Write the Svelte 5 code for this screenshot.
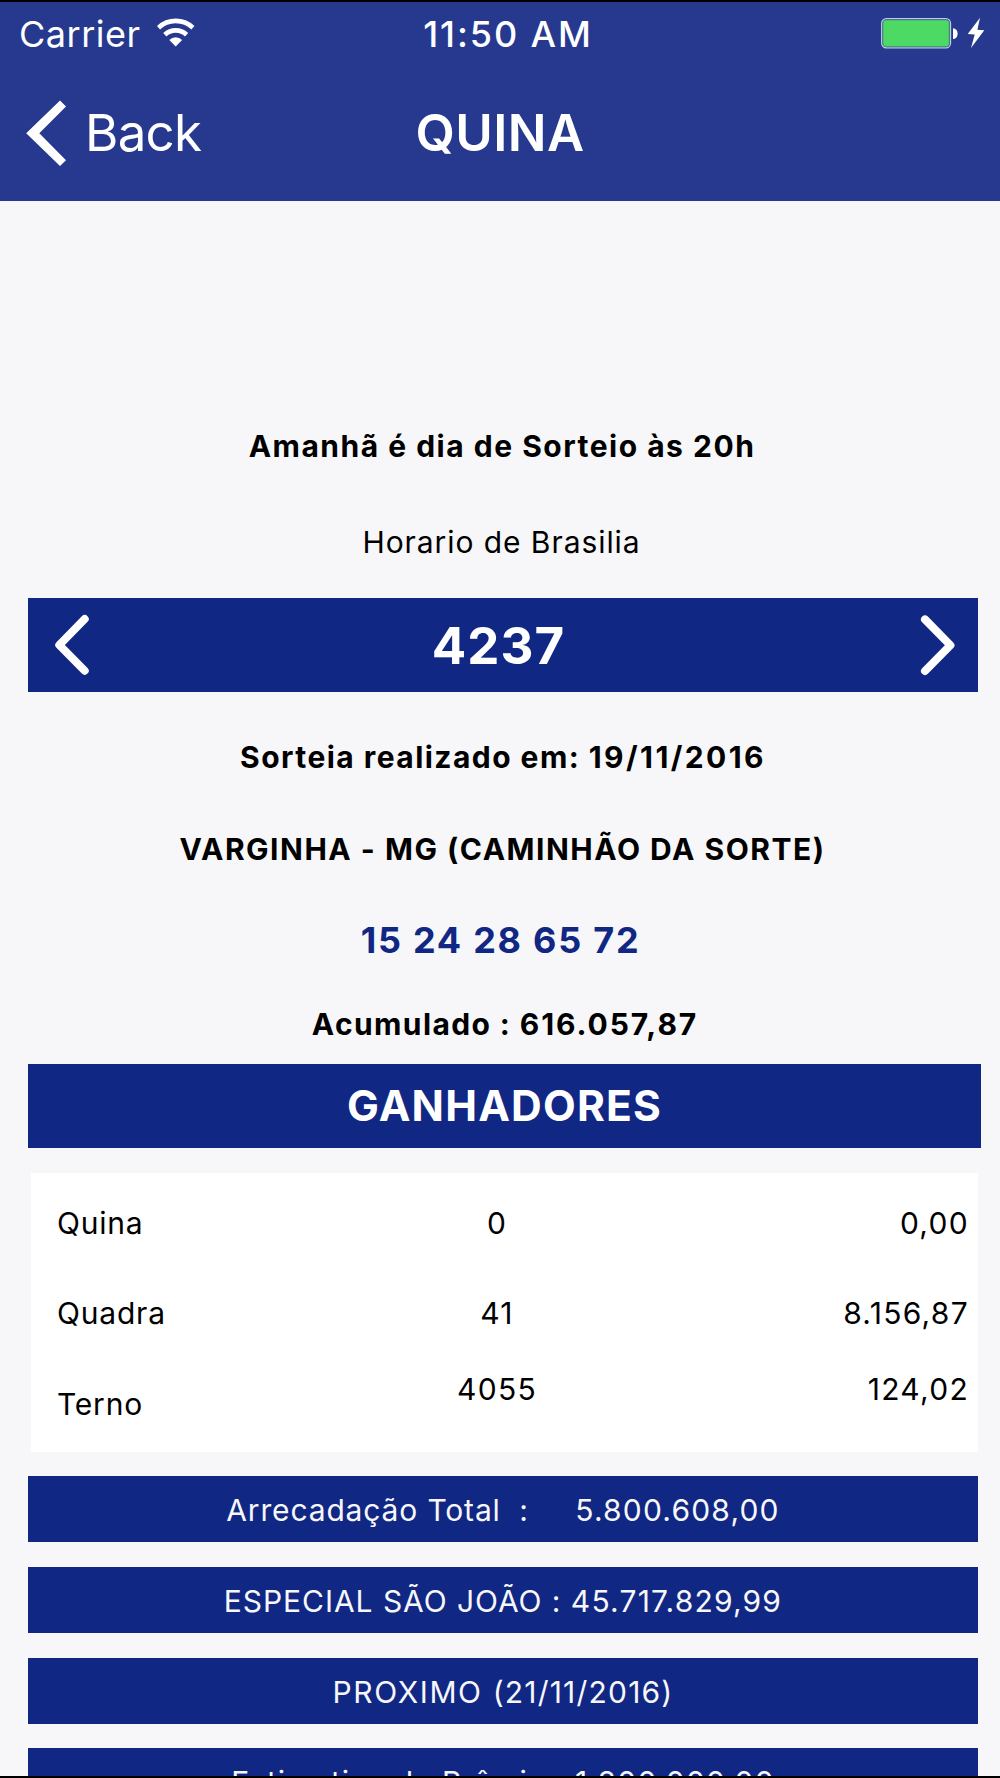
<script>
  const title = 'QUINA';
  const contest = '4237';
  const numbers = [15, 24, 28, 65, 72];

  const winners = [
    { label: 'Quina', count: '0', prize: '0,00' },
    { label: 'Quadra', count: '41', prize: '8.156,87' },
    { label: 'Terno', count: '4055', prize: '124,02' }
  ];

  const totals = [
    { label: 'Arrecadação Total  :     ', value: '5.800.608,00', tracking: 0.85 },
    { label: 'ESPECIAL SÃO JOÃO : ', value: '45.717.829,99', tracking: 0.95 },
    { label: 'PROXIMO ', value: '(21/11/2016)', tracking: 1.6 },
    { label: 'Estimativa de Prêmio : ', value: '1.800.000,00', tracking: 0.95 }
  ];
</script>

<div class="screen">
  <header>
    <div class="status-bar">
      <div class="carrier">
        <span>Carrier</span>
        <svg width="38" height="32" viewBox="0 0 38 32" fill="none" aria-hidden="true">
          <path d="M1.5 9.7A25.2 25.2 0 0 1 35.9 9.7" stroke="#fff" stroke-width="4.6" />
          <path d="M7.8 16.7A15.9 15.9 0 0 1 29.6 16.7" stroke="#fff" stroke-width="4.7" />
          <path d="M18.7 28.4 12.3 21.9A9.2 9.2 0 0 1 25.1 21.9Z" fill="#fff" />
        </svg>
      </div>
      <span class="time">11:50 AM</span>
      <svg class="battery" width="105" height="34" viewBox="0 0 105 34" aria-hidden="true">
        <rect x="1.7" y="1.7" width="68.8" height="29.2" rx="4.6" fill="none" stroke="#c3c9e3" stroke-width="1.3" />
        <rect x="3" y="3" width="66.2" height="26.6" rx="3" fill="#4cd964" stroke="#3f9c78" stroke-width="0.8" />
        <path d="M73 11.3A4.6 5.3 0 0 1 73 22Z" fill="#fff" />
        <path d="M100 .7 87.7 17 94.7 17.4 91 31 104.3 13.3 97.4 12.8Z" fill="#fff" />
      </svg>
    </div>

    <nav>
      <button class="back">
        <svg width="40" height="66" viewBox="0 0 40 66" aria-hidden="true">
          <path d="M34 .6 40 6.5 13.3 33.3 40 60.2 34 66 .2 33.3Z" fill="#fff" />
        </svg>
        <span>Back</span>
      </button>
      <h1>{title}</h1>
    </nav>
  </header>

  <main>
    <p class="line next-draw">Amanhã é dia de Sorteio às 20h</p>
    <p class="line timezone">Horario de Brasilia</p>

    <div class="contest">
      <button aria-label="Anterior">
        <svg width="36" height="62" viewBox="0 0 36 62" fill="none" aria-hidden="true">
          <path d="M30.7 5 5.3 31 30.7 56.7" stroke="#fff" stroke-width="8" stroke-linecap="round" stroke-linejoin="round" />
        </svg>
      </button>
      <h2>{contest}</h2>
      <button aria-label="Próximo">
        <svg width="36" height="62" viewBox="0 0 36 62" fill="none" aria-hidden="true">
          <path d="M5 5.4 30.4 31.2 5 57" stroke="#fff" stroke-width="8" stroke-linecap="round" stroke-linejoin="round" />
        </svg>
      </button>
    </div>

    <p class="line date">Sorteia realizado em: <span class="value">19/11/2016</span></p>
    <p class="line place">VARGINHA - MG (CAMINHÃO DA SORTE)</p>
    <p class="line numbers">{numbers.join(' ')}</p>
    <p class="line rollover">Acumulado : <span class="value">616.057,87</span></p>

    <h3>GANHADORES</h3>

    <div class="winners">
      {#each winners as row}
        <div class="row">
          <span class="label">{row.label}</span>
          <span class="count">{row.count}</span>
          <span class="prize">{row.prize}</span>
        </div>
      {/each}
    </div>

    <div class="totals">
      {#each totals as total}
        <div class="total" style="letter-spacing: {total.tracking}px">{total.label}<span class="amount">{total.value}</span></div>
      {/each}
    </div>
  </main>
</div>

<style>
  :global(body) {
    background: #000;
  }

  .screen {
    box-sizing: border-box;
    width: 1000px;
    height: 1778px;
    background: #f7f7f9;
    border-top: 2px solid #000;
    border-bottom: 2px solid #000;
    overflow: hidden;
    color: #000;
    font-family: Inter, 'Liberation Sans', sans-serif;
    font-size: 30px;
  }

  h1, h2, h3, p {
    margin: 0;
  }

  button {
    display: flex;
    align-items: center;
    padding: 0;
    border: none;
    background: none;
    color: inherit;
    font: inherit;
  }

  svg {
    display: block;
    flex-shrink: 0;
  }

  header {
    height: 199px;
    background: #27398f;
    color: #fff;
  }

  .status-bar {
    display: grid;
    grid-template-columns: 1fr auto 1fr;
    align-items: center;
    height: 64px;
    padding: 0 15px 0 19px;
    font-size: 36px;
    line-height: 44px;
  }

  .carrier {
    display: flex;
    align-items: center;
    gap: 16px;
    letter-spacing: 0.5px;
  }

  .time {
    margin-left: 12px;
    font-weight: 500;
    letter-spacing: 1.9px;
  }

  .battery {
    justify-self: end;
  }

  nav {
    display: grid;
    grid-template-columns: 1fr auto 1fr;
    align-items: center;
    height: 134px;
    padding: 0 26px;
    font-size: 51px;
    line-height: 62px;
  }

  .back {
    gap: 19px;
    letter-spacing: -0.7px;
  }

  h1 {
    font-size: 51px;
    font-weight: 600;
    letter-spacing: 0.4px;
  }

  main {
    padding: 223px 22px 0 28px;
  }

  .line {
    line-height: 44px;
    text-align: center;
    white-space: nowrap;
    font-weight: 700;
  }

  .value {
    letter-spacing: 2.2px;
  }

  .next-draw {
    padding-right: 2px;
    letter-spacing: 1.5px;
  }

  .timezone {
    margin-top: 52px;
    padding-right: 3px;
    font-weight: 400;
    letter-spacing: 0.93px;
  }

  .contest {
    display: flex;
    align-items: center;
    justify-content: space-between;
    height: 93.3px;
    margin-top: 34.3px;
    padding: 0 22px 0 26px;
    background: #112784;
    color: #fff;
  }

  h2 {
    padding: 3px 13px 0 0;
    font-size: 51px;
    font-weight: 700;
    line-height: 62px;
    letter-spacing: 1.1px;
  }

  .date {
    margin-top: 43.2px;
    letter-spacing: 1.45px;
  }

  .date .value {
    letter-spacing: 2.4px;
  }

  .place {
    margin-top: 48px;
    padding-right: 1px;
    letter-spacing: 1.5px;
  }

  .numbers {
    margin-top: 47px;
    padding-right: 5px;
    color: #112784;
    font-size: 36px;
    letter-spacing: 1.75px;
  }

  .rollover {
    margin-top: 40px;
    padding-left: 4px;
    letter-spacing: 1.4px;
  }

  .rollover .value {
    letter-spacing: 1.9px;
  }

  h3 {
    height: 84.6px;
    margin: 17.8px -3px 0 0;
    background: #112784;
    color: #fff;
    font-size: 42.5px;
    font-weight: 700;
    line-height: 84px;
    letter-spacing: 1.2px;
    text-align: center;
  }

  .winners {
    box-sizing: border-box;
    height: 278.7px;
    margin: 25.1px 0 0 3px;
    padding: 4px 9px 0 26px;
    background: #fff;
  }

  .row {
    display: grid;
    grid-template-columns: 300px 280px 1fr;
    align-items: center;
    height: 90.67px;
    line-height: 44px;
    letter-spacing: 1.3px;
  }

  .label {
    letter-spacing: 0.8px;
  }

  .count {
    text-align: center;
  }

  .prize {
    text-align: right;
  }

  /* the last row's values sit a little above its label */
  .row:last-child .count,
  .row:last-child .prize {
    padding-bottom: 29px;
  }

  .totals {
    display: flex;
    flex-direction: column;
    gap: 24.67px;
    margin-top: 24.3px;
  }

  .total {
    height: 66px;
    background: #112784;
    color: #f7f7f9;
    line-height: 68px;
    text-align: center;
    white-space: pre;
  }

  .amount {
    letter-spacing: 1.2px;
  }
</style>
